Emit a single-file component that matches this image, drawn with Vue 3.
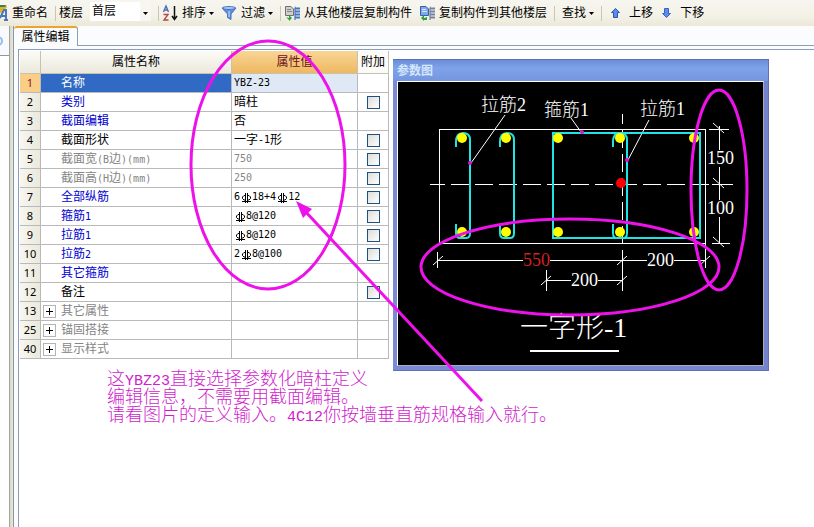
<script setup>
import { ref } from 'vue'

const floor = ref('首层')

const rows = ref([
  { no: 1, name: '名称', value: 'YBZ-23', tone: 'selected' },
  { no: 2, name: '类别', value: '暗柱', tone: 'blue', extra: false },
  { no: 3, name: '截面编辑', value: '否', tone: 'blue' },
  { no: 4, name: '截面形状', value: '一字-1形', tone: 'black', extra: false },
  { no: 5, name: '截面宽(B边)(mm)', value: '750', tone: 'gray', extra: false },
  { no: 6, name: '截面高(H边)(mm)', value: '250', tone: 'gray', extra: false },
  { no: 7, name: '全部纵筋', value: '6#18+4#12', tone: 'blue', extra: false },
  { no: 8, name: '箍筋1', value: '#8@120', tone: 'blue', extra: false },
  { no: 9, name: '拉筋1', value: '#8@120', tone: 'blue', extra: false },
  { no: 10, name: '拉筋2', value: '2#8@100', tone: 'blue', extra: false },
  { no: 11, name: '其它箍筋', value: '', tone: 'blue' },
  { no: 12, name: '备注', value: '', tone: 'black', extra: false },
  { no: 13, name: '其它属性', value: '', tone: 'gray', group: true },
  { no: 25, name: '锚固搭接', value: '', tone: 'gray', group: true },
  { no: 40, name: '显示样式', value: '', tone: 'gray', group: true }
])

// Splits a string into Latin runs, CJK runs and rebar-grade signs ("#").
function runs(text) {
  return (text.match(/#|[\x20-\x22\x24-\x7e]+|[^\x20-\x7e]+/g) || []).map((t) => ({
    t,
    kind: t === '#' ? 'rebar' : /^[\x20-\x7e]/.test(t) ? 'latin' : 'cjk'
  }))
}

const bars = [462, 506, 558, 620, 694]
const ties = [456, 500, 613]
const slashes = [[438, 260], [622, 260], [705, 260], [546, 280], [622, 280]]
const backslashes = [[719, 129], [719, 184], [719, 243]]
</script>

<template>
  <div class="app" lang="zh-CN">
    <header class="toolbar">
      <button class="tool" type="button">
        <svg width="8" height="18" viewBox="0 0 8 18">
          <path d="M0 2 L6 1 L7 3 L3 8 L0 9Z" fill="#d9b22e" />
          <path d="M0 1 H6 L5 3 H0Z" fill="#3f7d4a" />
          <path d="M0 14 L4 6 L6 6 L6 15 M1 12 H6 M4 16 H8" fill="none" stroke="#4a78b8" stroke-width="2" />
        </svg>
        重命名
      </button>
      <span class="sep tight"></span>
      <label class="caption" for="floor">楼层</label>
      <span class="combo">
        <select id="floor" v-model="floor">
          <option>首层</option>
        </select>
        <svg class="combo-caret" width="5" height="3" viewBox="0 0 5 3"><path d="M0 0H5L2.5 3Z" /></svg>
      </span>
      <span class="sep tight"></span>
      <button class="tool" type="button">
        <svg width="16" height="18" viewBox="0 0 16 18">
          <path d="M1.5 8 L4 2 L6.5 8 M2.5 6 H5.5" fill="none" stroke="#4a6cb4" stroke-width="1.4" />
          <path d="M1.5 10.5 H6 L2 16 H6.5" fill="none" stroke="#b04a4a" stroke-width="1.4" />
          <path d="M12.5 2 V15 M10 12 L12.5 15.5 L15 12" fill="none" stroke="#111" stroke-width="1.5" />
        </svg>
        排序
        <svg class="caret" width="5" height="3" viewBox="0 0 5 3"><path d="M0 0H5L2.5 3Z" /></svg>
      </button>
      <button class="tool" type="button">
        <svg width="16" height="16" viewBox="0 0 16 16">
          <path d="M1 3 H15 L10 9 V14.500 L6.500 12.500 V9Z" fill="#5f8fdc" stroke="#4672bd" />
          <ellipse cx="8" cy="3" rx="6.500" ry="1.500" fill="#a9c8f3" stroke="#4b78c4" />
          <path d="M8 6 V12" stroke="#a9c8f3" stroke-width="1.500" />
        </svg>
        过滤
        <svg class="caret" width="5" height="3" viewBox="0 0 5 3"><path d="M0 0H5L2.5 3Z" /></svg>
      </button>
      <span class="sep tight"></span>
      <button class="tool" type="button">
        <svg width="16" height="18" viewBox="0 0 16 18">
          <path d="M1.5 2.5 H7 L9.5 5 V11.5 H1.5Z" fill="#cfcfcf" stroke="#707070" />
          <path d="M3 5.5H7M3 7.5H8" stroke="#858585" />
          <path d="M2 13 L5 14 L5 11 L8 14 L5 17 L5 16Z" fill="#2fa040" />
          <path d="M10 4 L12 2 V16 H10Z" fill="#86a6d8" />
          <path d="M11 4.500H16M11 7.500H16M11 10.500H16M11 13.500H16" stroke="#4477bd" stroke-width="2" />
        </svg>
        从其他楼层复制构件
      </button>
      <button class="tool" type="button">
        <svg width="16" height="18" viewBox="0 0 16 18">
          <path d="M1.5 2.5 H7 L9.5 5 V11.5 H1.5Z" fill="#7fa8ea" stroke="#3560b0" />
          <path d="M3 5.5H7M3 7.5H8" stroke="#dce8fb" />
          <path d="M8 13 L5 14 L5 11 L2 14 L5 17 L5 16 H8Z" fill="#2fa040" />
          <path d="M10 4 L12 2 V16 H10Z" fill="#a5adbd" />
          <path d="M11 4.500H16M11 7.500H16M11 10.500H16M11 13.500H16" stroke="#76839c" stroke-width="2" />
        </svg>
        复制构件到其他楼层
      </button>
      <span class="sep"></span>
      <button class="tool" type="button">
        查找
        <svg class="caret" width="5" height="3" viewBox="0 0 5 3"><path d="M0 0H5L2.5 3Z" /></svg>
      </button>
      <span class="sep"></span>
      <button class="tool" type="button">
        <svg width="16" height="16" viewBox="0 0 16 16">
          <path d="M6.500 3.500 L10.500 7.500 H8.500 V12.500 H4.500 V7.500 H2.500Z" fill="#5b8def" stroke="#2d53ae" />
        </svg>
        上移
      </button>
      <button class="tool" type="button">
        <svg width="16" height="16" viewBox="0 0 16 16">
          <path d="M6.500 12.500 L10.500 8.500 H8.500 V3.500 H4.500 V8.500 H2.500Z" fill="#5b8def" stroke="#3b62c0" />
        </svg>
        下移
      </button>
    </header>

    <div class="body">
      <aside class="side">
        <div class="side-head">
          <svg width="4" height="12" viewBox="0 0 4 12"><circle cx="-2" cy="6" r="4" fill="none" stroke="#8fc0ea" stroke-width="2" /></svg>
        </div>
      </aside>
      <div class="splitter"></div>

      <main class="main">
        <nav class="tabs">
          <button class="tab" type="button">属性编辑</button>
          <span class="tab-rest"></span>
        </nav>
        <section class="content">
          <table class="props">
            <colgroup>
              <col class="c-no" /><col class="c-name" /><col class="c-value" /><col class="c-extra" />
            </colgroup>
            <thead>
              <tr>
                <th></th>
                <th>属性名称</th>
                <th class="active">属性值</th>
                <th class="plain">附加</th>
              </tr>
            </thead>
            <tbody>
              <tr v-for="row in rows" :key="row.no" :class="row.tone">
                <th scope="row">{{ row.no }}</th>
                <td class="name">
                  <div class="cell">
                    <span class="slot"><button v-if="row.group" class="expand" type="button" :aria-label="row.name"><svg width="7" height="7" viewBox="0 0 7 7"><path d="M0 3.5H7M3.5 0V7" stroke="#000" /></svg></button></span>
                    <span><span v-for="(r, i) in runs(row.name)" :key="i" :class="r.kind">{{ r.t }}</span></span>
                  </div>
                </td>
                <td class="value">
                  <div class="cell">
                    <template v-for="(r, i) in runs(row.value)" :key="i">
                      <svg v-if="r.kind === 'rebar'" class="rebar" width="12" height="11" viewBox="0 0 12 11">
                        <path d="M5.5 1V11M7.5 1V11M2 9.5H11M5.5 3.5H4L2.5 5V6.500L4 8H5.5M7.5 3.500H9L10.500 5V6.500L9 8H7.5" fill="none" stroke="#000" />
                      </svg>
                      <span v-else :class="r.kind">{{ r.t }}</span>
                    </template>
                  </div>
                </td>
                <td class="extra">
                  <div v-if="row.extra !== undefined" class="cell">
                    <input v-model="row.extra" type="checkbox" :aria-label="'附加 ' + row.name" />
                  </div>
                </td>
              </tr>
            </tbody>
          </table>

          <section class="dialog">
            <h2>参数图</h2>
            <svg class="drawing" viewBox="398 82 365 283">
              <g class="thin">
                <rect x="439.5" y="129.5" width="266" height="114" />
                <path d="M430 184.5H712" stroke-dasharray="18 6" stroke-dashoffset="3" />
                <path d="M622.5 114V250" stroke-dasharray="18 6" stroke-dashoffset="8" />
                <path d="M505 115L471 163M571 118L581 132M649 120L628 160" />
                <path d="M719.5 126V150M719.5 167V200M719.5 217V244" />
                <path d="M709 129.5H729M712 184.5H733M712 243.5H730" />
                <path d="M437.5 252V268M546.5 270V291M622.5 250V291M705.5 243V268" />
                <path d="M438 260.5H523M550 260.5H647M674 260.5H706M546 280.5H571M598 280.5H623" />
                <path v-for="([x, y], i) in slashes" :key="'s' + i" :d="`M${x - 5} ${y + 5}L${x + 5} ${y - 4}`" />
                <path v-for="([x, y], i) in backslashes" :key="'b' + i" :d="`M${x - 6} ${y - 6}L${x + 5} ${y + 4}`" />
              </g>
              <g class="steel">
                <rect x="553" y="133" width="147" height="105" />
                <path
                  v-for="x in ties"
                  :key="x"
                  :d="`M${x} 147V142Q${x} 133 ${x + 7} 133Q${x + 14} 133 ${x + 14} 140V233Q${x + 14} 238 ${x + 10} 238H${x + 4}Q${x} 238 ${x} 233V224`"
                />
              </g>
              <g fill="#ffff00">
                <circle v-for="x in bars" :key="'t' + x" :cx="x" cy="138" r="5" />
                <circle v-for="x in bars" :key="'u' + x" :cx="x" cy="232" r="5" />
              </g>
              <circle cx="621" cy="183" r="5" fill="#ff0000" />
              <g fill="#e010d0">
                <circle cx="470" cy="163" r="2" /><circle cx="582" cy="132" r="2" /><circle cx="627" cy="160" r="2" />
              </g>
              <g class="label">
                <text x="481" y="111">拉筋2</text>
                <text x="544" y="116">箍筋1</text>
                <text x="640" y="115">拉筋1</text>
                <text x="707" y="164">150</text>
                <text x="707" y="214">100</text>
                <text x="523" y="266" class="red">550</text>
                <text x="647" y="266">200</text>
                <text x="571" y="286">200</text>
                <text x="520" y="337" class="big">一字形-1</text>
              </g>
              <path d="M530 351H619" stroke="#fff" stroke-width="2" />
            </svg>
          </section>
        </section>
      </main>
    </div>

    <svg class="marks" width="814" height="527" viewBox="0 0 814 527">
      <g fill="none" stroke="#ee12ea" stroke-width="3">
        <ellipse cx="268" cy="165" rx="77" ry="124" />
        <ellipse cx="570" cy="267" rx="149" ry="48" />
        <ellipse cx="719" cy="190" rx="28" ry="100" />
        <path d="M482 401L304 210" />
      </g>
      <path d="M296 201L312 209L303 218Z" fill="#ee12ea" />
    </svg>
    <p class="note">这<span>YBZ23</span>直接选择参数化暗柱定义<br />编辑信息，不需要用截面编辑。<br />请看图片的定义输入。<span>4C12</span>你按墙垂直筋规格输入就行。</p>
  </div>
</template>

<style>
body {
  margin: 0;
  background: #fff;
}
</style>

<style scoped>
.app {
  position: relative;
  display: flex;
  flex-direction: column;
  min-height: 100vh;
  overflow: hidden;
  font: 12px/18px "Liberation Sans", "Noto Sans CJK SC", sans-serif;
  color: #000;
}
button,
select {
  font: inherit;
  color: inherit;
}
.toolbar {
  display: flex;
  align-items: center;
  gap: 7px;
  height: 26px;
  white-space: nowrap;
  background: linear-gradient(#f6f5ef, #f4f2e8 60%, #ebe8d8);
}
.tool {
  display: flex;
  flex: none;
  align-items: center;
  gap: 4px;
  padding: 0;
  border: 0;
  background: none;
}
.caret {
  margin-left: -1px;
}
.sep {
  flex: none;
  width: 1px;
  height: 15px;
  background: #c9c6b8;
}
.tight {
  margin-right: -4px;
}
.combo {
  position: relative;
  flex: none;
  display: flex;
  align-self: flex-start;
  margin-top: 2px;
}
.combo select {
  width: 61px;
  height: 19px;
  padding: 0 0 1px 2px;
  border: 0;
  border-radius: 0;
  background: linear-gradient(90deg, #fff 50px, #f7f6f1 50px);
  appearance: none;
}
.combo-caret {
  position: absolute;
  right: 3px;
  top: 10px;
  pointer-events: none;
}
.body {
  display: flex;
  flex: 1;
}
.side {
  width: 9px;
  background: #fff;
}
.side-head {
  display: flex;
  align-items: center;
  height: 29px;
  border-bottom: 1px solid #8796ad;
  background: #f7f9fc;
}
.splitter {
  width: 5px;
  background: linear-gradient(90deg, #a5a698 1px, #d8d8c9 1px, #e9e7da 4px, #8796ad 4px);
}
.main {
  display: flex;
  flex: 1;
  flex-direction: column;
  min-width: 0;
  background: #fbfcfe;
}
.tabs {
  display: flex;
  height: 20px;
}
.tab {
  width: 64px;
  padding: 0;
  border: 1px solid #8b9dbb;
  border-width: 2px 1px 0 0;
  border-top-color: #eda32e;
  border-radius: 3px 3px 0 0;
  line-height: 17px;
  background: #fbfcfe;
}
.tab-rest {
  flex: 1;
  border-bottom: 1px solid #8b9dbb;
}
.content {
  display: flex;
  flex: 1;
  align-items: flex-start;
  gap: 4px;
  margin: 3px 0 0 4px;
  padding: 1px;
  border: 1px solid #8b9dbb;
  border-width: 1px 0 0 1px;
  background: #fff;
}
.props {
  flex: none;
  width: 369px;
  table-layout: fixed;
  border-spacing: 0;
}
.c-no {
  width: 21px;
}
.c-name {
  width: 191px;
}
.c-value {
  width: 126px;
}
.c-extra {
  width: 31px;
}
.props th,
.props td {
  box-sizing: border-box;
  padding: 0;
  border: 1px solid #b9b9b9;
  border-width: 0 1px 1px 0;
  font-weight: 400;
  line-height: 18px;
  height: 19px;
  white-space: nowrap;
}
.props thead th {
  height: 23px;
  border-color: #c5c2b2;
  background: linear-gradient(#fcfbf7, #ebe9dc);
}
.props thead .active {
  color: #6b1023;
  background: linear-gradient(#f8d596, #efb860);
}
.props thead .plain {
  background: #fcfbf7;
}
.props tbody th {
  font: 11px/18px "Noto Sans", sans-serif;
  text-align: center;
  background: linear-gradient(90deg, #f7f6f0, #ebe9dc);
}
.props .selected th {
  color: #8a1020;
  background: #fbce88;
}
.selected .name {
  color: #fff;
  background: #316ac5;
}
.selected .value {
  background: #dfe9f5;
}
.blue .name {
  color: #0000d0;
}
.gray {
  color: #858585;
}
.gray th {
  color: #000;
}
.cell {
  display: flex;
  align-items: center;
  height: 18px;
}
.slot {
  display: flex;
  width: 18px;
  padding-left: 2px;
}
.expand {
  display: flex;
  align-items: center;
  justify-content: center;
  width: 13px;
  height: 13px;
  padding: 0;
  border: 1px solid #b4b4b4;
  background: #fff;
}
.value .cell {
  padding-left: 2px;
}
.latin {
  font-family: "DejaVu Sans Mono", monospace;
  font-size: 10px;
  line-height: 1;
}
.extra .cell {
  justify-content: center;
}
.extra input {
  width: 13px;
  height: 13px;
  margin: 0;
  border: 1px solid #1c5180;
  background: linear-gradient(135deg, #dcdcd7, #fff);
  appearance: none;
}
.dialog {
  flex: 0 1 376px;
  box-sizing: border-box;
  margin-top: 8px;
  padding: 0 4px 4px;
  border: 1px solid #5f6fb8;
  border-width: 1px 1px 1px 0;
  background: linear-gradient(90deg, #7b8ad6, #7484cc);
}
.dialog h2 {
  margin: 0 -4px;
  padding: 2px 4px 1px;
  font-size: 12px;
  line-height: 18px;
  color: #d5e6fb;
  background: linear-gradient(#6c8ddb, #7ea3ea 40%, #7596e0);
}
.drawing {
  display: block;
  box-sizing: border-box;
  width: 100%;
  border: 1px solid #a9adc0;
  border-top-color: #fff;
  border-left-color: #fff;
  background: #000;
}
.thin {
  fill: none;
  stroke: #fff;
}
.steel {
  fill: none;
  stroke: #20e4e4;
  stroke-width: 2;
}
.label {
  fill: #fff;
  font: 300 18px "Liberation Serif", "Noto Sans CJK SC", serif;
}
.label .red {
  fill: #d02020;
}
.label .big {
  font-size: 28px;
}
.marks {
  position: absolute;
  left: 0;
  top: 0;
  pointer-events: none;
}
.note {
  position: absolute;
  left: 107px;
  top: 368px;
  margin: 0;
  font: 300 18px/18px "Noto Sans CJK SC", sans-serif;
  color: #d01ccc;
  white-space: nowrap;
}
.note span {
  font-family: "Liberation Mono", monospace;
  font-size: 15px;
  line-height: 0;
}
</style>
